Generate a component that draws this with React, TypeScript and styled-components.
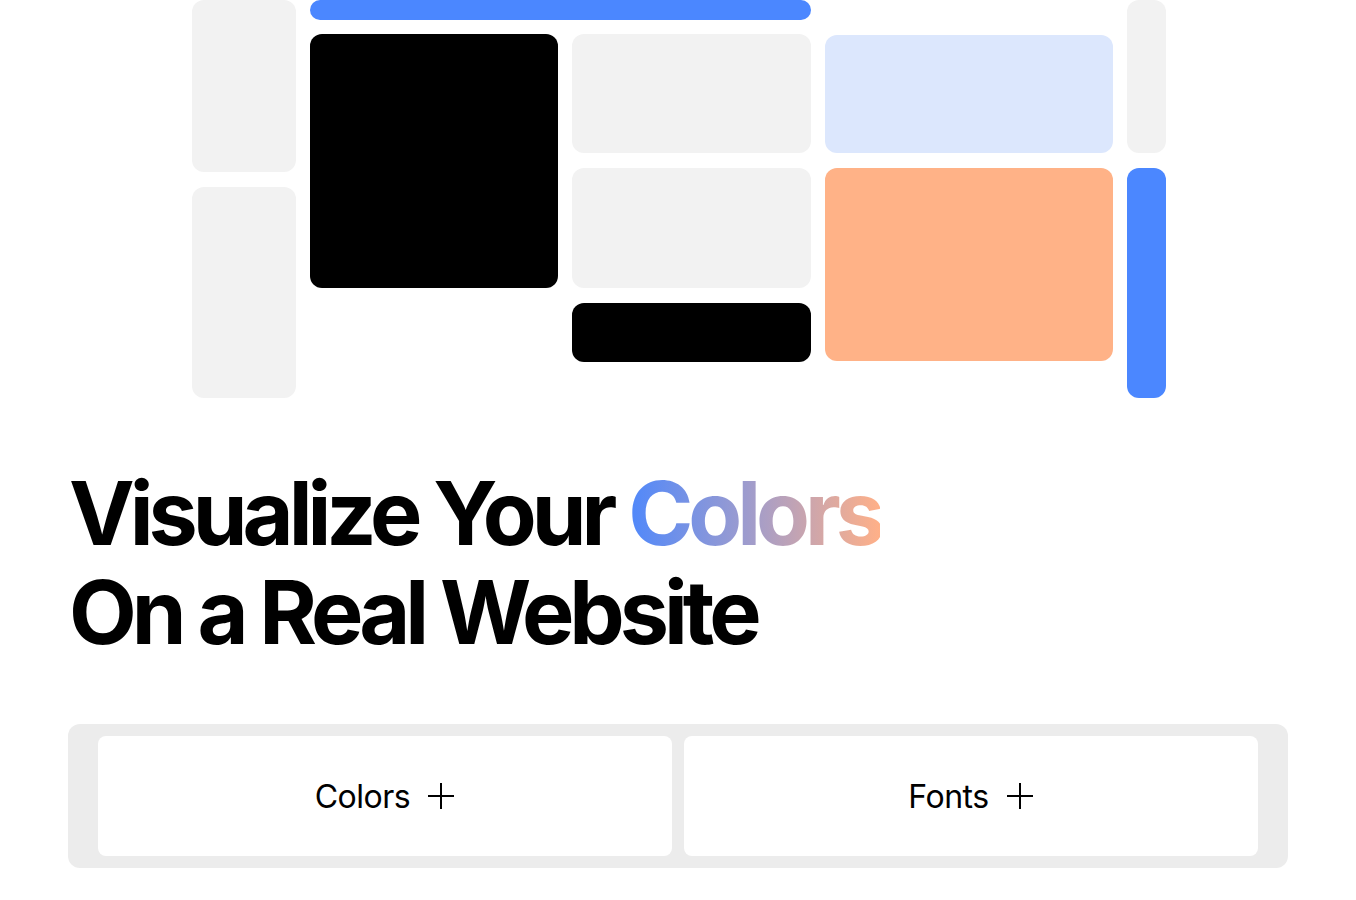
import React from "react";
import styled, { createGlobalStyle } from "styled-components";

const GlobalStyle = createGlobalStyle`
  html, body {
    margin: 0;
    padding: 0;
    background: #ffffff;
    font-family: Inter, "Noto Sans", "Liberation Sans", sans-serif;
    color: #000;
  }
`;

const Page = styled.div`
  width: 100%;
  min-height: 900px;
  display: flex;
  flex-direction: column;
  padding: 0 68px;
  box-sizing: border-box;
`;

// preview mosaic of the palette applied to page blocks
const Mosaic = styled.div`
  align-self: center;
  margin-left: 2px;
  display: flex;
  gap: 14px;
  align-items: flex-start;
`;

const Column = styled.div<{ $width: number; $top?: number }>`
  width: ${(p) => p.$width}px;
  padding-top: ${(p) => p.$top ?? 0}px;
  display: flex;
  flex-direction: column;
  gap: 15px;
`;

const Group = styled.div`
  display: flex;
  flex-direction: column;
  gap: 14px;
`;

const GroupRow = styled.div`
  display: flex;
  gap: 14px;
  align-items: flex-start;
`;

const Tile = styled.div<{ $h: number; $bg: string; $w?: number }>`
  height: ${(p) => p.$h}px;
  width: ${(p) => (p.$w ? `${p.$w}px` : "100%")};
  background: ${(p) => p.$bg};
  border-radius: 12px;
  flex-shrink: 0;
`;

const Heading = styled.h1`
  margin: 66px 0 0;
  padding-left: 1px;
  font-size: 88px;
  line-height: 99px;
  font-weight: 700;
  letter-spacing: -0.057em;
  color: #000;
`;

const Gradient = styled.span`
  background: linear-gradient(90deg, #4f88fb 0%, #9a9bd0 45%, #ffb088 100%);
  -webkit-background-clip: text;
  background-clip: text;
  color: transparent;
`;

const Picker = styled.div`
  margin-top: 62px;
  background: #ececec;
  border-radius: 12px;
  padding: 12px 30px;
  display: grid;
  grid-template-columns: 1fr 1fr;
  gap: 12px;
`;

const PickerButton = styled.button`
  height: 120px;
  border: none;
  border-radius: 8px;
  background: #fff;
  display: flex;
  align-items: center;
  justify-content: center;
  gap: 17px;
  font-family: Inter, "Noto Sans", "Liberation Sans", sans-serif;
  font-size: 32px;
  font-weight: 400;
  letter-spacing: -0.015em;
  color: #000;
  cursor: pointer;
`;

const PlusIcon = () => (
  <svg width="28" height="28" viewBox="0 0 28 28" fill="none">
    <path d="M14 1v26M1 14h26" stroke="#000" strokeWidth="2" />
  </svg>
);

const BLUE = "#4b87ff";
const GRAY = "#f2f2f2";

export default function App() {
  return (
    <>
      <GlobalStyle />
      <Page>
        <Mosaic>
          <Column $width={104}>
            <Tile $h={172} $bg={GRAY} />
            <Tile $h={211} $bg={GRAY} />
          </Column>
          <Group>
            <Tile $h={20} $bg={BLUE} />
            <GroupRow>
              <Tile $w={248} $h={254} $bg="#000" />
              <Column $width={239} $top={0}>
                <Tile $h={119} $bg={GRAY} />
                <Tile $h={120} $bg={GRAY} />
                <Tile $h={59} $bg="#000" />
              </Column>
            </GroupRow>
          </Group>
          <Column $width={288} $top={35}>
            <Tile $h={118} $bg="#dce7fd" />
            <Tile $h={193} $bg="#ffb287" />
          </Column>
          <Column $width={39}>
            <Tile $h={153} $bg={GRAY} />
            <Tile $h={230} $bg={BLUE} />
          </Column>
        </Mosaic>

        <Heading>
          Visualize Your <Gradient>Colors</Gradient>
          <br />
          On a Real Website
        </Heading>

        <Picker>
          <PickerButton>
            Colors <PlusIcon />
          </PickerButton>
          <PickerButton>
            Fonts <PlusIcon />
          </PickerButton>
        </Picker>
      </Page>
    </>
  );
}
